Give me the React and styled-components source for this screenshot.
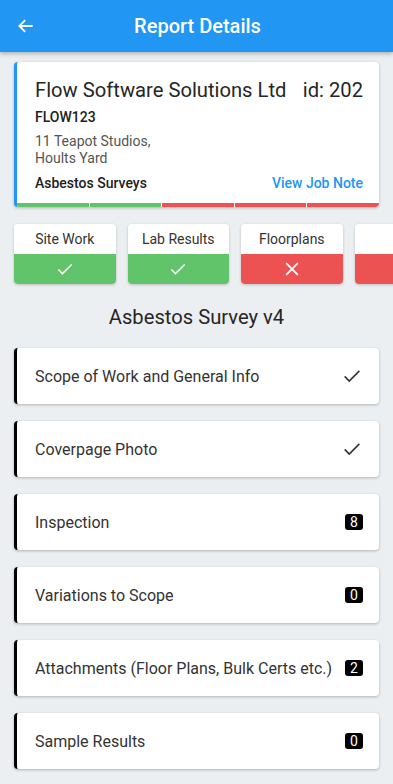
import React from 'react';
import styled, { createGlobalStyle } from 'styled-components';

const GlobalStyle = createGlobalStyle`
	body {
		margin: 0;
		background: #eceff1;
		font-family: Roboto, "Noto Sans", sans-serif;
	}
`;

const Page = styled.div`
	width: 393px;
	height: 784px;
	overflow: hidden;
	background: #eceff1;
`;

const Header = styled.header`
	height: 52px;
	background: #2196f3;
	display: flex;
	align-items: center;
	box-shadow: 0 2px 4px rgba(0, 0, 0, 0.25);
`;

const BackButton = styled.div`
	width: 52px;
	display: flex;
	justify-content: center;
	padding-right: 2px;
`;

const Title = styled.h1`
	flex: 1;
	margin: 0 52px 0 0;
	text-align: center;
	color: #fff;
	font-size: 20px;
	font-weight: 500;
`;

const Content = styled.div`
	padding: 10px 14px 0;
	display: flex;
	flex-direction: column;
`;

const JobCard = styled.div`
	background: #fff;
	border-radius: 4px;
	border-left: 3px solid #2196f3;
	box-shadow: 0 1px 3px rgba(0, 0, 0, 0.25);
	overflow: hidden;
`;

const JobBody = styled.div`
	padding: 16px 16px 12px 18px;
	color: #212121;
`;

const JobTitleRow = styled.div`
	display: flex;
	justify-content: space-between;
	font-size: 20.2px;
	line-height: 24px;
	font-weight: 400;
	color: #262626;
`;

const JobCode = styled.div`
	margin-top: 7px;
	font-size: 14px;
	font-weight: 500;
`;

const Address = styled.div`
	margin-top: 8px;
	font-size: 14px;
	line-height: 16.5px;
	color: #555;
`;

const JobFooter = styled.div`
	margin-top: 9px;
	display: flex;
	justify-content: space-between;
	font-size: 14px;
	font-weight: 500;
`;

const JobLink = styled.span`
	color: #2196f3;
`;

const StageBar = styled.div`
	display: flex;
	gap: 1px;
	height: 4px;
	background: #fff;
`;

const StageSegment = styled.div`
	flex: 1;
	background: ${p => (p.$done ? '#62c46a' : '#ec5252')};
`;

const Tabs = styled.div`
	display: flex;
	gap: 12px;
	margin-top: 17px;
	width: 430px;
`;

const Tab = styled.div`
	width: 101.5px;
	flex-shrink: 0;
	border-radius: 4px;
	overflow: hidden;
	background: #fff;
	box-shadow: 0 1px 3px rgba(0, 0, 0, 0.2);
`;

const TabLabel = styled.div`
	height: 30px;
	display: flex;
	align-items: center;
	justify-content: center;
	font-size: 14px;
	color: #333;
`;

const TabStatus = styled.div`
	height: 30px;
	display: flex;
	align-items: center;
	justify-content: center;
	background: ${p => (p.$done ? '#62c46a' : '#ec5252')};
`;

const SectionTitle = styled.h2`
	margin: 21px 0 0;
	text-align: center;
	font-size: 20.2px;
	line-height: 24px;
	font-weight: 400;
	color: #262626;
`;

const List = styled.div`
	margin-top: 19px;
	display: flex;
	flex-direction: column;
	gap: 17px;
`;

const Item = styled.div`
	height: 56px;
	background: #fff;
	border-radius: 4px;
	border-left: 3px solid #000;
	box-shadow: 0 1px 3px rgba(0, 0, 0, 0.25);
	display: flex;
	align-items: center;
	justify-content: space-between;
	padding: 0 16px 0 18px;
	font-size: 16px;
	color: #333;
`;

const Badge = styled.span`
	background: #000;
	color: #fff;
	font-size: 14px;
	border-radius: 3px;
	min-width: 18px;
	height: 16px;
	line-height: 16px;
	text-align: center;
	padding: 0 2px;
	box-sizing: border-box;
`;

const Check = ({ color = '#fff', size = 20 }) => (
	<svg width={size} height={size} viewBox="0 0 24 24">
		<path d="M4 12.5l5 5L20 6.5" fill="none" stroke={color} strokeWidth="1.8" />
	</svg>
);

const Cross = () => (
	<svg width="20" height="20" viewBox="0 0 24 24">
		<path d="M5 5l14 14M19 5L5 19" fill="none" stroke="#fff" strokeWidth="2.2" />
	</svg>
);

const tabs = [
	{ label: 'Site Work', done: true },
	{ label: 'Lab Results', done: true },
	{ label: 'Floorplans', done: false },
	{ label: '', done: false },
];

const sections = [
	{ name: 'Scope of Work and General Info', check: true },
	{ name: 'Coverpage Photo', check: true },
	{ name: 'Inspection', count: 8 },
	{ name: 'Variations to Scope', count: 0 },
	{ name: 'Attachments (Floor Plans, Bulk Certs etc.)', count: 2 },
	{ name: 'Sample Results', count: 0 },
];

const App = () => {
	return (
		<Page>
			<GlobalStyle />
			<Header>
				<BackButton>
					<svg width="20" height="20" viewBox="0 0 24 24">
						<path d="M20 12H5M11 5l-7 7 7 7" fill="none" stroke="#fff" strokeWidth="2.2" />
					</svg>
				</BackButton>
				<Title>Report Details</Title>
			</Header>
			<Content>
				<JobCard>
					<JobBody>
						<JobTitleRow>
							<span>Flow Software Solutions Ltd</span>
							<span>id: 202</span>
						</JobTitleRow>
						<JobCode>FLOW123</JobCode>
						<Address>
							11 Teapot Studios,
							<br />
							Hoults Yard
						</Address>
						<JobFooter>
							<span>Asbestos Surveys</span>
							<JobLink>View Job Note</JobLink>
						</JobFooter>
					</JobBody>
					<StageBar>
						{[true, true, false, false, false].map((d, i) => (
							<StageSegment key={i} $done={d} />
						))}
					</StageBar>
				</JobCard>
				<Tabs>
					{tabs.map((t, i) => (
						<Tab key={i}>
							<TabLabel>{t.label}</TabLabel>
							<TabStatus $done={t.done}>{t.done ? <Check /> : <Cross />}</TabStatus>
						</Tab>
					))}
				</Tabs>
				<SectionTitle>Asbestos Survey v4</SectionTitle>
				<List>
					{sections.map(s => (
						<Item key={s.name}>
							<span>{s.name}</span>
							{s.check ? <Check color="#333" size={22} /> : <Badge>{s.count}</Badge>}
						</Item>
					))}
				</List>
			</Content>
		</Page>
	);
};

export default App;
